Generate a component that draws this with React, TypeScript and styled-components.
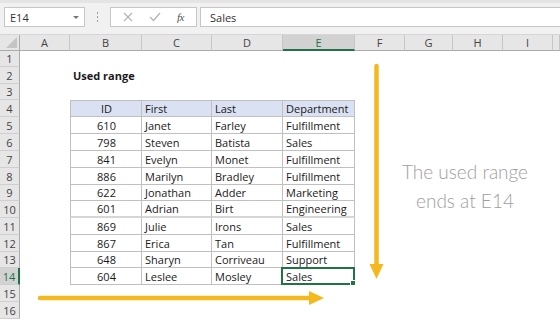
import React from "react";
import styled, { createGlobalStyle } from "styled-components";

const GREEN = "#217346";
const ARROW = "#f4b91f";

const GlobalStyle = createGlobalStyle`
  html, body {
    margin: 0;
    padding: 0;
    background: #ffffff;
  }
  body {
    font-family: "Open Sans", "Liberation Sans", sans-serif;
    width: 560px;
    height: 320px;
    overflow: hidden;
  }
`;

// A..I, then a partly visible J column
const columns = ["A", "B", "C", "D", "E", "F", "G", "H", "I", ""];
const colWidths = [50, 72, 70, 71, 72, 50, 48, 50, 50];
const rowHeights = [16, 17, 16, 17, 17, 17, 17, 17, 16, 17, 17, 17, 16, 17, 17, 17];

const data: [number, string, string, string][] = [
  [610, "Janet", "Farley", "Fulfillment"],
  [798, "Steven", "Batista", "Sales"],
  [841, "Evelyn", "Monet", "Fulfillment"],
  [886, "Marilyn", "Bradley", "Fulfillment"],
  [622, "Jonathan", "Adder", "Marketing"],
  [601, "Adrian", "Birt", "Engineering"],
  [869, "Julie", "Irons", "Sales"],
  [867, "Erica", "Tan", "Fulfillment"],
  [648, "Sharyn", "Corriveau", "Support"],
  [604, "Leslee", "Mosley", "Sales"],
];

const Screen = styled.div`
  position: relative;
  width: 560px;
  height: 320px;
  overflow: hidden;
`;

const FormulaBar = styled.div`
  height: 35px;
  box-sizing: border-box;
  background: #f1f1f1;
  border-top: 3px solid #e4e4e4;
  border-bottom: 1px solid #d6d6d6;
  display: flex;
  align-items: flex-start;
  padding: 4px 0 0 4px;
`;

const NameBox = styled.div`
  width: 81px;
  height: 20px;
  box-sizing: border-box;
  background: #ffffff;
  border: 1px solid #c6c6c6;
  display: flex;
  align-items: center;
  justify-content: space-between;
  padding: 0 5px 0 5px;
  font-size: 11px;
  color: #333;
`;

const DropArrow = styled.span`
  width: 0;
  height: 0;
  border-left: 3px solid transparent;
  border-right: 3px solid transparent;
  border-top: 3px solid #777;
`;

const Grip = styled.div`
  width: 25px;
  height: 20px;
  display: flex;
  flex-direction: column;
  align-items: center;
  justify-content: center;
  gap: 2px;
  span {
    width: 1px;
    height: 2px;
    background: #a0a0a0;
  }
`;

const ButtonBox = styled.div`
  width: 87px;
  height: 20px;
  box-sizing: border-box;
  background: #ffffff;
  border: 1px solid #c6c6c6;
  display: flex;
  align-items: center;
  justify-content: space-around;
  padding: 0 4px;
  margin-right: 3px;
`;

const FxLabel = styled.span`
  font-family: "Liberation Serif", serif;
  font-style: italic;
  font-size: 11px;
  color: #555;
  letter-spacing: -0.5px;
`;

const FormulaInput = styled.div`
  flex: 1;
  height: 20px;
  box-sizing: border-box;
  background: #ffffff;
  border: 1px solid #c6c6c6;
  border-right: none;
  display: flex;
  align-items: center;
  padding-left: 9px;
  font-size: 11px;
  color: #333;
`;

const Sheet = styled.div`
  display: grid;
  grid-template-columns: 20px ${colWidths.map((w) => `${w}px`).join(" ")} 1fr;
  grid-template-rows: 16px ${rowHeights.map((h) => `${h}px`).join(" ")};
`;

const Corner = styled.div`
  background: #e6e6e6;
  border-right: 1px solid #ababab;
  border-bottom: 1px solid #ababab;
  box-sizing: border-box;
  position: relative;
  &::after {
    content: "";
    position: absolute;
    right: 2px;
    bottom: 2px;
    width: 0;
    height: 0;
    border-left: 11px solid transparent;
    border-bottom: 11px solid #c4c4c4;
  }
`;

const ColHeader = styled.div<{ $active?: boolean }>`
  box-sizing: border-box;
  background: ${(p) => (p.$active ? "#d2d2d2" : "#e6e6e6")};
  border-right: 1px solid #c6c6c6;
  border-bottom: ${(p) => (p.$active ? `2px solid ${GREEN}` : "1px solid #ababab")};
  color: ${(p) => (p.$active ? GREEN : "#444")};
  font-size: 11px;
  display: flex;
  align-items: center;
  justify-content: center;
  padding-top: ${(p) => (p.$active ? "1px" : "0")};
`;

const RowHeader = styled.div<{ $active?: boolean }>`
  box-sizing: border-box;
  background: ${(p) => (p.$active ? "#d2d2d2" : "#e6e6e6")};
  border-right: ${(p) => (p.$active ? `2px solid ${GREEN}` : "1px solid #ababab")};
  border-bottom: 1px solid #cfcfcf;
  color: ${(p) => (p.$active ? GREEN : "#444")};
  font-size: 11px;
  display: flex;
  align-items: center;
  justify-content: center;
`;

const Cell = styled.div<{
  $table?: boolean;
  $head?: boolean;
  $first?: boolean;
  $top?: boolean;
  $thick?: boolean;
  $center?: boolean;
  $bold?: boolean;
}>`
  position: relative;
  box-sizing: border-box;
  background: ${(p) => (p.$head ? "#d9e1f2" : "#ffffff")};
  border-right: ${(p) => (p.$table ? "1px solid #c0c0c0" : "none")};
  border-bottom: ${(p) =>
    p.$thick ? "2px solid #d6d6d6" : p.$table ? "1px solid #c0c0c0" : "none"};
  border-left: ${(p) => (p.$first ? "1px solid #c0c0c0" : "none")};
  border-top: ${(p) => (p.$top ? "1px solid #c0c0c0" : "none")};
  font-size: 11px;
  font-weight: ${(p) => (p.$bold ? 700 : 400)};
  color: #1a1a1a;
  display: flex;
  align-items: center;
  justify-content: ${(p) => (p.$center ? "center" : "flex-start")};
  padding: 0 2px 0 3px;
  white-space: nowrap;
`;

const Selection = styled.div`
  position: absolute;
  left: -2px;
  top: -1px;
  right: -1px;
  bottom: -1px;
  border: 2px solid ${GREEN};
  pointer-events: none;
  &::after {
    content: "";
    position: absolute;
    right: -4px;
    bottom: -4px;
    width: 5px;
    height: 5px;
    background: ${GREEN};
    border: 1px solid #ffffff;
  }
`;

const Callout = styled.div`
  position: absolute;
  left: 392px;
  top: 157px;
  width: 146px;
  text-align: center;
  font-family: "Lato", "DejaVu Sans", sans-serif;
  font-weight: 300;
  font-size: 19px;
  line-height: 29px;
  color: #9e9e9e;
`;

const ArrowLayer = styled.svg`
  position: absolute;
  left: 0;
  top: 0;
  pointer-events: none;
`;

function SheetCell({ row, col }: { row: number; col: number }) {
  // row: sheet row number (1-based), col: 1 = A ... 10 = J
  const inTable = row >= 4 && row <= 14 && col >= 2 && col <= 5;
  if (!inTable) {
    if (row === 2 && col === 2) {
      return <Cell $bold>Used range</Cell>;
    }
    return <Cell />;
  }
  const head = row === 4;
  const values = head ? ["ID", "First", "Last", "Department"] : data[row - 5].map(String);
  return (
    <Cell
      $table
      $head={head}
      $first={col === 2}
      $top={head}
      $thick={row === 10}
      $center={col === 2}
    >
      {values[col - 2]}
      {row === 14 && col === 5 && <Selection />}
    </Cell>
  );
}

export default function App() {
  return (
    <Screen>
      <GlobalStyle />
      <FormulaBar>
        <NameBox>
          <span>E14</span>
          <DropArrow />
        </NameBox>
        <Grip>
          <span />
          <span />
          <span />
        </Grip>
        <ButtonBox>
          <svg width="10" height="10" viewBox="0 0 10 10">
            <path d="M1 1 L9 9 M9 1 L1 9" stroke="#b4b4b4" strokeWidth="1.2" fill="none" />
          </svg>
          <svg width="12" height="10" viewBox="0 0 12 10">
            <path d="M1 5 L4.5 8.5 L11 1" stroke="#b4b4b4" strokeWidth="1.3" fill="none" />
          </svg>
          <FxLabel>fx</FxLabel>
        </ButtonBox>
        <FormulaInput>Sales</FormulaInput>
      </FormulaBar>

      <Sheet>
        <Corner />
        {columns.map((c, i) => (
          <ColHeader key={`h${i}`} $active={c === "E"}>
            {c}
          </ColHeader>
        ))}
        {rowHeights.map((_, r) => {
          const row = r + 1;
          return (
            <React.Fragment key={row}>
              <RowHeader $active={row === 14}>{row}</RowHeader>
              {columns.map((_, c) => (
                <SheetCell key={c} row={row} col={c + 1} />
              ))}
            </React.Fragment>
          );
        })}
      </Sheet>

      <Callout>
        The used range
        <br />
        ends at E14
      </Callout>

      <ArrowLayer width="560" height="320" viewBox="0 0 560 320">
        <line x1="376.5" y1="66" x2="376.5" y2="266" stroke={ARROW} strokeWidth="4.5" strokeLinecap="round" />
        <polygon points="369.5,264 383.5,264 376.5,279" fill={ARROW} />
        <line x1="40" y1="298" x2="312" y2="298" stroke={ARROW} strokeWidth="4.5" strokeLinecap="round" />
        <polygon points="309,291 309,305 324,298" fill={ARROW} />
      </ArrowLayer>
    </Screen>
  );
}
